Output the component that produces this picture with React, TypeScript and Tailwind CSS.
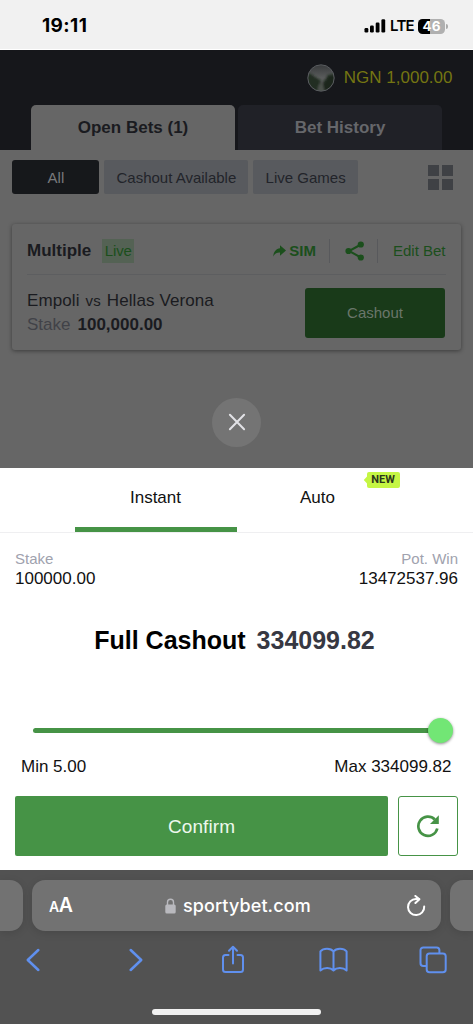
import React from "react";

function StatusBar() {
  return (
    <header className="flex h-[50px] items-center justify-between border-b border-white bg-[#f1f1f1] pl-[42px] pr-[25px] pt-[3px] font-['Inter',sans-serif] text-black">
      <span className="text-[19px] font-bold leading-6 tracking-[0.4px]">19:11</span>
      <div className="flex items-center">
        <svg width="22" height="14" viewBox="0 0 22 14" fill="#000">
          <rect x="0.5" y="9" width="3.8" height="4.5" rx="1.2" />
          <rect x="6" y="6.5" width="3.8" height="7" rx="1.2" />
          <rect x="11.7" y="3.5" width="3.8" height="10" rx="1.2" />
          <rect x="17.4" y="0.3" width="3.8" height="13.2" rx="1.2" />
        </svg>
        <span className="ml-[4px] w-[24px] text-[15px] font-semibold leading-5 tracking-[-0.7px]">LTE</span>
        <div className="ml-[4px] flex h-[15px] w-[27px] overflow-hidden rounded-[4.5px] bg-[linear-gradient(90deg,#000_46%,#b0b0b0_46%)] text-[13.5px] font-bold leading-[15px] text-white">
          <span className="w-full text-center">46</span>
        </div>
        <div className="ml-[1px] h-[5px] w-[2px] rounded-r-full bg-[#aaa]" />
      </div>
    </header>
  );
}

function Avatar() {
  return (
    <svg width="28" height="28" viewBox="0 0 28 28">
      <defs>
        <clipPath id="avatar">
          <circle cx="14" cy="14" r="13" />
        </clipPath>
        <linearGradient id="sky" x1="0" y1="0" x2="0" y2="1">
          <stop offset="0" stopColor="#36383a" />
          <stop offset="0.5" stopColor="#5a5c5c" />
          <stop offset="1" stopColor="#3b403b" />
        </linearGradient>
        <filter id="soft">
          <feGaussianBlur stdDeviation="1.1" />
        </filter>
      </defs>
      <g clipPath="url(#avatar)">
        <rect width="28" height="28" fill="url(#sky)" />
        <g filter="url(#soft)">
          <path d="M-2 9l6 1 4 3 5 3 1 5-3 9H-2z" fill="#222d22" />
          <path d="M30 10l-9 1-2 4-3 4 1 11h13z" fill="#1c261c" />
          <path d="M12 20l3-1 3 9h-8z" fill="#4c514c" />
        </g>
      </g>
      <circle cx="14" cy="14" r="13.2" fill="none" stroke="#5a5d60" strokeWidth="1" />
    </svg>
  );
}

function PageHeader() {
  return (
    <section className="h-[100px] bg-[#16171b]">
      <div className="flex h-[55px] items-center justify-end pr-[20.5px] text-[17px] leading-5 text-[#747512]">
        <Avatar />
        <span className="ml-[9px]">NGN 1,000.00</span>
      </div>
      <div className="flex h-[45px] gap-[3px] pl-[31px] text-center text-[17px] font-bold leading-[45px]">
        <div className="w-[204px] rounded-t-[5px] bg-[#666] text-[#1a1b20]">Open Bets (1)</div>
        <div className="w-[204px] rounded-t-[5px] bg-[#202127] text-[#66676b]">Bet History</div>
      </div>
    </section>
  );
}

function BetCard() {
  return (
    <div className="ml-[12px] mt-[30px] h-[126px] w-[449px] rounded-[3px] bg-[#666] px-[15px] shadow-[0_1px_4px_rgba(0,0,0,0.42)]">
      <div className="flex h-[51px] items-center border-b border-[#5d5e60] pt-[3px] text-[15px] leading-5 text-[#1b4f1c]">
        <span className="text-[17px] font-bold text-[#1a1b20]">Multiple</span>
        <span className="ml-[11px] h-[24px] w-[32px] bg-[#546254] text-center leading-[24px] tracking-[-0.2px]">Live</span>
        <svg className="ml-auto" width="13" height="12" viewBox="0 0 13 12" fill="#1b4f1c">
          <path d="M7 0.2L13 5.5 7 10.8V7.6C4.2 7.4 2 8.5 0.3 11.5 0.5 6.8 3 3.8 7 3.3z" />
        </svg>
        <span className="ml-[3px] font-bold">SIM</span>
        <span className="ml-[13px] h-[24px] w-px bg-[#58595c]" />
        <svg className="ml-[15px]" width="20" height="20" viewBox="0 0 20 20" fill="#1b4f1c">
          <path d="M16 3.5L4 10l12 6.5" fill="none" stroke="#1b4f1c" strokeWidth="2" />
          <circle cx="3.5" cy="10" r="3.1" />
          <circle cx="15.8" cy="3.5" r="3.1" />
          <circle cx="15.8" cy="16.5" r="3.1" />
        </svg>
        <span className="ml-[12px] h-[24px] w-px bg-[#58595c]" />
        <span className="ml-[15px] mr-[0.5px]">Edit Bet</span>
      </div>
      <div className="flex justify-between pt-[13px]">
        <div className="pt-[1px] text-[17px] leading-[24px] text-[#1a1b20]">
          <p className="whitespace-pre tracking-[0.1px]">
            Empoli<span className="mx-[6px] text-[15px]">vs</span>Hellas Verona
          </p>
          <p>
            <span className="mr-[7px] text-[#414248]">Stake</span>
            <b>100,000.00</b>
          </p>
        </div>
        <button className="mr-[1px] h-[50px] w-[140px] rounded-[3px] bg-[#193a19] pt-px text-[15px] text-[#6a766a]">Cashout</button>
      </div>
    </div>
  );
}

function OpenBets() {
  return (
    <main className="h-[318px] bg-[#666] pt-[10px]">
      <div className="flex h-[34px] pl-[12.4px] text-center text-[15px] leading-[35px] text-[#22242a]">
        <span className="w-[87px] rounded-[3px] bg-[#16181b] text-[15px] text-[#78797b]">All</span>
        <span className="ml-[5px] w-[144px] rounded-[2px] bg-[#585a5e]">Cashout Available</span>
        <span className="ml-[5px] w-[104.5px] rounded-[2px] bg-[#585a5e]">Live Games</span>
        <div className="ml-[70px] mt-[5px] grid h-[25px] w-[25px] grid-cols-2 gap-[3px]">
          <i className="bg-[#3f4145]" />
          <i className="bg-[#3f4145]" />
          <i className="bg-[#3f4145]" />
          <i className="bg-[#3f4145]" />
        </div>
      </div>
      <BetCard />
      <div className="mt-[48px] flex justify-center">
        <button className="flex h-[49px] w-[49px] items-center justify-center rounded-full bg-[#747474]">
          <svg className="-mt-px" width="18" height="18" viewBox="0 0 18 18" stroke="#e2e2e6" strokeWidth="2" strokeLinecap="round">
            <path d="M1.9 1.7l14.2 14.6M16.1 1.7L1.9 16.3" />
          </svg>
        </button>
      </div>
    </main>
  );
}

function CashoutSheet() {
  return (
    <section className="h-[402px] bg-white text-[17px] leading-5 text-[#111]">
      <div className="flex h-[65px] justify-center border-b border-[#efeff1] text-center leading-[60px]">
        <div className="h-[64px] w-[162px] border-b-[5px] border-[#469346]">Instant</div>
        <div className="relative h-[64px] w-[162px]">
          Auto
          <div className="absolute right-[-1px] top-[4px] flex h-[16px]">
            <svg width="4" height="16" viewBox="0 0 4 16" fill="#c5f644">
              <path d="M4 4.5v7L0.8 8z" />
            </svg>
            <span className="w-[33px] rounded-[2px] bg-[#c5f644] text-center font-['Roboto',sans-serif] text-[11px] font-bold leading-[16px] text-[#2a351b]">NEW</span>
          </div>
        </div>
      </div>
      <div className="flex justify-between px-[15px] pt-[16px]">
        <div>
          <p className="text-[15px] text-[#a0a2ae]">Stake</p>
          <p>100000.00</p>
        </div>
        <div className="text-right">
          <p className="text-[15px] text-[#a0a2ae]">Pot. Win</p>
          <p>13472537.96</p>
        </div>
      </div>
      <h2 className="mt-[36px] flex justify-center gap-[11px] pr-[4px] text-[25px] font-bold leading-[30px] text-black">
        Full Cashout <span className="text-[#373842]">334099.82</span>
      </h2>
      <div className="mt-[63px] flex h-[25px] items-center pl-[33px]">
        <div className="h-[5px] w-[396px] rounded-l-full bg-[#469346]" />
        <div className="ml-[-1px] h-[25px] w-[25px] rounded-full bg-[#72e675] shadow-[0_1px_3px_rgba(0,0,0,0.45)]" />
      </div>
      <div className="mt-[14px] flex justify-between pl-[21px] pr-[21.5px]">
        <span>Min 5.00</span>
        <span>Max 334099.82</span>
      </div>
      <div className="mt-[19px] flex h-[60px] gap-[10px] px-[15px]">
        <button className="flex-1 rounded-[2px] bg-[#469346] pt-[2px] text-[19px] tracking-[0.1px] text-[#edf8ed]">Confirm</button>
        <button className="flex w-[60px] items-center justify-center rounded-[3px] border border-[#469346]">
          <svg width="24" height="24" viewBox="0 0 24 24">
            <path d="M21.3 14.5A9.6 9.6 0 1 1 18.8 5.5" fill="none" stroke="#469346" strokeWidth="2.7" />
            <path d="M22.8 1.2V10h-8.8z" fill="#469346" />
          </svg>
        </button>
      </div>
    </section>
  );
}

function BrowserBar() {
  return (
    <footer className="flex h-[154px] flex-col bg-[#525252] pt-[10px]">
      <div className="flex h-[51px] justify-between">
        <div className="w-[23px] rounded-r-[13px] bg-[#727272] shadow-[0_2px_8px_rgba(0,0,0,0.12)]" />
        <div className="flex w-[409px] items-center rounded-[13px] bg-[#727272] pl-[17px] pr-[15px] font-['Inter',sans-serif] font-medium text-white shadow-[0_2px_8px_rgba(0,0,0,0.12)]">
          <span className="flex w-[24px] items-baseline font-semibold leading-6 tracking-[-0.5px]">
            <span className="text-[14px]">A</span>
            <span className="text-[19.5px]">A</span>
          </span>
          <svg className="ml-[92px]" width="11" height="16" viewBox="0 0 11 16">
            <rect x="0.3" y="6.5" width="10.4" height="9" rx="1.5" fill="#b9b9be" />
            <path d="M2.5 7V4.2a3 3 0 0 1 6 0V7" fill="none" stroke="#b9b9be" strokeWidth="1.4" />
          </svg>
          <span className="ml-[7px] text-[18px] leading-6 tracking-[0.1px]">sportybet.com</span>
          <svg className="ml-auto" width="20" height="22" viewBox="0 0 20 22" fill="none" stroke="#fff" strokeWidth="2" strokeLinecap="round" strokeLinejoin="round">
            <path d="M18.2 11.5A8.1 8.1 0 1 1 10 3.9h3" />
            <path d="M9.4 0.9l4 3.3-4 3.8" />
          </svg>
        </div>
        <div className="w-[23px] rounded-l-[13px] bg-[#727272] shadow-[0_2px_8px_rgba(0,0,0,0.12)]" />
      </div>
      <nav className="flex h-[58px] items-center pl-[26px] text-[#6090ee]">
        <svg width="14" height="24" viewBox="0 0 14 24" fill="none" stroke="currentColor" strokeWidth="2.5" strokeLinecap="round" strokeLinejoin="round">
          <path d="M12.3 2L1.8 12l10.5 10" />
        </svg>
        <svg className="ml-[89px]" width="14" height="24" viewBox="0 0 14 24" fill="none" stroke="currentColor" strokeWidth="2.5" strokeLinecap="round" strokeLinejoin="round">
          <path d="M1.7 2l10.5 10L1.7 22" />
        </svg>
        <svg className="ml-[78px]" width="24" height="30" viewBox="0 0 24 30" fill="none" stroke="currentColor" strokeWidth="2" strokeLinecap="round" strokeLinejoin="round">
          <path d="M7.5 10H4.5a2.5 2.5 0 0 0-2.5 2.5v12a2.5 2.5 0 0 0 2.500 2.500h15a2.500 2.500 0 0 0 2.500-2.500v-12a2.500 2.500 0 0 0-2.500-2.500h-3" />
          <path d="M12 18.5V2M8 5.8L12 1.700l4 4.100" />
        </svg>
        <svg className="ml-[74px]" width="29" height="26" viewBox="0 0 29 26" fill="none" stroke="currentColor" strokeWidth="2" strokeLinejoin="round">
          <path d="M14.5 4.5C11.7 0.8 4.5 0.7 1.4 4.4V23.5c3.5-3.2 10.1-3.2 13.1 0 3-3.2 9.6-3.2 13.1 0V4.4C24.5 0.7 17.3 0.8 14.5 4.5zM14.5 4.5v19" />
        </svg>
        <svg className="ml-[71px]" width="28" height="28" viewBox="0 0 28 28" fill="none" stroke="currentColor" strokeWidth="2">
          <path d="M7.7 20H4.3a2.800 2.800 0 0 1-2.800-2.800V4.300A2.800 2.800 0 0 1 4.300 1.500h13.300a2.800 2.800 0 0 1 2.800 2.800v3.200" />
          <rect x="7.700" y="7.500" width="19" height="18.800" rx="2.800" />
        </svg>
      </nav>
      <div className="mx-auto mt-[20px] h-[6px] w-[169px] rounded-full bg-[#f1f1f1]" />
    </footer>
  );
}

export default function App() {
  return (
    <div className="h-[1024px] w-[473px] overflow-hidden font-['Liberation_Sans',Arial,sans-serif]">
      <StatusBar />
      <PageHeader />
      <OpenBets />
      <CashoutSheet />
      <BrowserBar />
    </div>
  );
}
